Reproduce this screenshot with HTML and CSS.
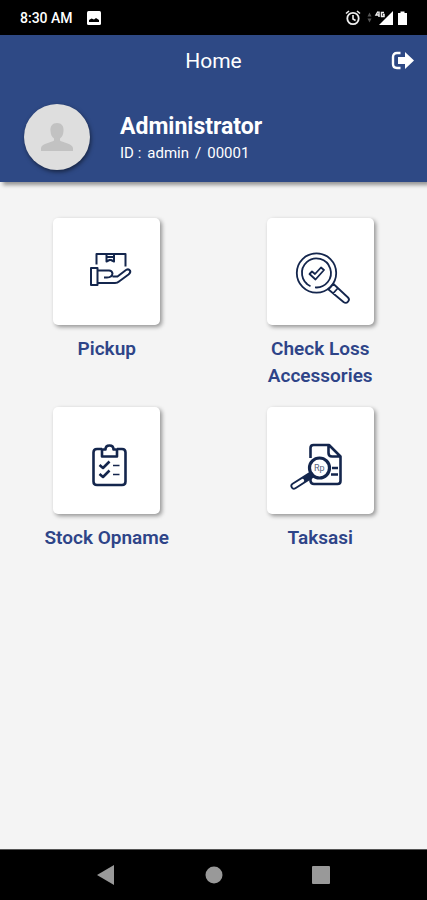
FILE: index.html
```html
<!DOCTYPE html>
<html lang="en">
<head>
<meta charset="utf-8">
<meta name="viewport" content="width=device-width, initial-scale=1">
<title>Home</title>
<link rel="stylesheet" href="styles.css">
</head>
<body>
<div class="status">
  <span class="time">8:30 AM</span>
  <svg class="picture" width="14" height="14" viewBox="0 0 14 14"><rect width="14" height="14" rx="1.5" fill="#fff"/><path d="M2 11V9l2.600-1.500 2.400 1L9 7l3 2v2z" fill="#000"/></svg>
  <svg class="signals" width="64" height="18" viewBox="0 0 64 18" fill="none" stroke="#eee">
    <circle cx="8" cy="9.500" r="5.700" stroke-width="1.800"/><path d="M8 6v4l2.600 1.500M1 4.500L4 2M15 4.500L12 2" stroke-width="1.600"/>
    <path d="M22.500 7.500l2-4 2 4zM22.500 9.500l2 4 2-4z" fill="#555" stroke="none"/>
    <path d="M48 2v14H34z" fill="#fff" stroke="none"/><path d="M33 2.500L31 6H34.500M34 2.500V8M39 3.500h-2.500v4H39v-2h-1" stroke-width="1.500"/>
    <path d="M53 4h2.500V2.500h4V4H62v12h-9z" fill="#fff" stroke="none"/>
  </svg>
</div>
<header class="header">
  <div class="bar">
    <h1 class="title">Home</h1>
    <button class="logout" type="button" aria-label="Log out">
      <svg width="24" height="20" viewBox="0 0 24 20"><path d="M9.500 2H6Q2 2 2 6v7q0 4 4 4h3.500" fill="none" stroke="#fff" stroke-width="2.400"/><path d="M7 6h7V1l9 8.500-9 8.500v-5H7z" fill="#fff"/></svg>
    </button>
  </div>
  <div class="profile">
    <div class="avatar"><svg width="34" height="30" viewBox="0 0 34 30" fill="#c2c2c2"><path d="M17 1c4.500 0 7 3 6.500 8-.3 4-1.500 6-3.500 7.500v2c2 2 12 2.500 13 7.500v3H1v-3c1-5 11-5.500 13-7.500v-2c-2-1.500-3.200-3.500-3.500-7.500C10 4 12.500 1 17 1z"/></svg></div>
    <div class="person">
      <h2 class="name">Administrator</h2>
      <p class="ident"><span>ID :</span> <span>admin</span> <span>/</span> <span>00001</span></p>
    </div>
  </div>
</header>
<main class="menu">
  <a class="item" href="#pickup">
    <span class="card"><svg class="icon" viewBox="0 0 107 107" stroke-width="2">
      <path d="M43.500 46.500V36h29v12.500M53.500 36v7.500l3-1.500 1.500 0 3 1.500V36M54 39h7"/>
      <path d="M38 50h6.500v17H38zM44.500 52.500H56q3 0 3.500 3-.5 4-5.500 4H51M59.500 58.500l5 0 8.500-6.500q2.500-1.500 4 .5 1 2-1.500 4L66 63.500q-1.500 1.500-4 1.500H44.500"/>
    </svg></span>
    <span class="label">Pickup</span>
  </a>
  <a class="item" href="#check-loss">
    <span class="card"><svg class="icon" viewBox="0 0 107 107" stroke-width="1.800">
      <circle cx="49.500" cy="55" r="19.700"/><path d="M43.500 68.200a14.500 14.500 0 1 1 4.500 1.200M39 65l1 1"/>
      <path d="M42.500 56l2.500-2.500 3 2.500 6-6.500 3 2.500-8.500 9.500zM61.500 71.500l5-5.500 14.500 13.500q2 2 0 4.200t-4.500.3zM66 75.500l5-5.500"/>
    </svg></span>
    <span class="label">Check Loss Accessories</span>
  </a>
  <a class="item" href="#stock-opname">
    <span class="card"><svg class="icon" viewBox="0 0 107 107" stroke-width="2.600">
      <path d="M49 42h-5q-3.500 0-3.500 3.500v29q0 3.500 3.500 3.500h25q3.500 0 3.500-3.500v-29Q72.500 42 69 42h-5"/>
      <path d="M49 42.500v7h15v-7h-3.500q0-4-4-4t-4 4zM46.500 58l3.500 3 6.500-6.500M46.500 67l3.500 3 6.500-6.500"/><path d="M60 58.500h6.500M60 67.500h6.500" stroke-width="1.500"/>
    </svg></span>
    <span class="label">Stock Opname</span>
  </a>
  <a class="item" href="#taksasi">
    <span class="card"><svg class="icon" viewBox="0 0 107 107" stroke-width="2.600">
      <path d="M43.500 51V41q0-3 3-3H62l11.500 11.500V74q0 3-3 3H47q-3 0-3.500-3v-3M61.500 38v8q0 3.500 3.500 3.500h8.500M65 61h6M64 67.500h7"/>
      <circle cx="52.500" cy="61" r="10" fill="#fff" stroke-width="3.200"/>
      <path d="M43.500 68.500L27 79" stroke-width="7" stroke-linecap="round"/><path d="M35.500 73.600L27 79" stroke="#fff" stroke-width="3.400" stroke-linecap="round"/>
      <text x="47" y="64" class="currency">Rp</text>
    </svg></span>
    <span class="label">Taksasi</span>
  </a>
</main>
<nav class="system">
  <button type="button" aria-label="Back"><svg width="20" height="20" viewBox="0 0 20 20"><path d="M1 10L18 0v20z"/></svg></button>
  <button type="button" aria-label="Home screen"><svg width="20" height="20" viewBox="0 0 20 20"><circle cx="10" cy="10" r="8.500"/></svg></button>
  <button type="button" aria-label="Recent apps"><svg width="20" height="20" viewBox="0 0 20 20"><rect x="1" y="1" width="18" height="18" rx="1"/></svg></button>
</nav>
</body>
</html>
```
FILE: styles.css
```css
* { box-sizing: border-box; }
body {
  margin: 0;
  min-height: 100vh;
  display: flex;
  flex-direction: column;
  background: #f4f4f4;
  font-family: Roboto, sans-serif;
}
h1, h2, p { margin: 0; }
button { padding: 0; border: 0; background: none; }
svg { display: block; }
.status {
  display: flex;
  align-items: center;
  height: 35px;
  padding: 0 18px 0 20px;
  background: #000;
  color: #fff;
}
.time { font-size: 14px; font-weight: 500; }
.picture { margin-left: 14px; }
.signals { margin-left: auto; }
.header {
  height: 147px;
  background: #2e4985;
  color: #fff;
  box-shadow: 3px 3px 4px rgba(0, 0, 0, 0.4);
}
.bar {
  display: grid;
  grid-template-columns: 1fr auto 1fr;
  align-items: center;
  height: 52px;
  padding: 0 12px;
}
.title {
  grid-column: 2;
  font-size: 21px;
  font-weight: 400;
}
.logout { justify-self: end; }
.profile {
  display: flex;
  align-items: center;
  gap: 30px;
  padding: 17px 24px 0;
}
.avatar {
  display: grid;
  place-items: center;
  width: 66px;
  height: 66px;
  border-radius: 50%;
  background: #dedede;
  box-shadow: 1px 2px 4px rgba(0, 0, 0, 0.5);
}
.person { padding-top: 4px; }
.name {
  font-size: 23px;
  line-height: 28px;
  font-weight: 700;
}
.ident {
  display: flex;
  gap: 6px;
  font-size: 15px;
  line-height: 24px;
}
.menu {
  flex: 1;
  display: grid;
  grid-template-columns: 1fr 1fr;
  align-content: start;
  row-gap: 18px;
  padding-top: 36px;
}
.item {
  display: flex;
  flex-direction: column;
  align-items: center;
  gap: 10px;
  color: #2e4488;
  text-decoration: none;
}
.card {
  width: 107px;
  height: 107px;
  border-radius: 5px;
  background: #fff;
  box-shadow: 2px 2px 4px rgba(0, 0, 0, 0.4);
}
.icon {
  fill: none;
  stroke: #14264d;
  stroke-linejoin: round;
}
.currency {
  font-size: 9px;
  fill: #5a6680;
  stroke: none;
}
.label {
  max-width: 140px;
  font-size: 19px;
  line-height: 27px;
  font-weight: 600;
  text-align: center;
}
.system {
  display: flex;
  justify-content: space-between;
  align-items: center;
  height: 51px;
  padding: 0 96px;
  background: #000;
  border-top: 1px solid #555;
}
.system svg { fill: #999; }
```
